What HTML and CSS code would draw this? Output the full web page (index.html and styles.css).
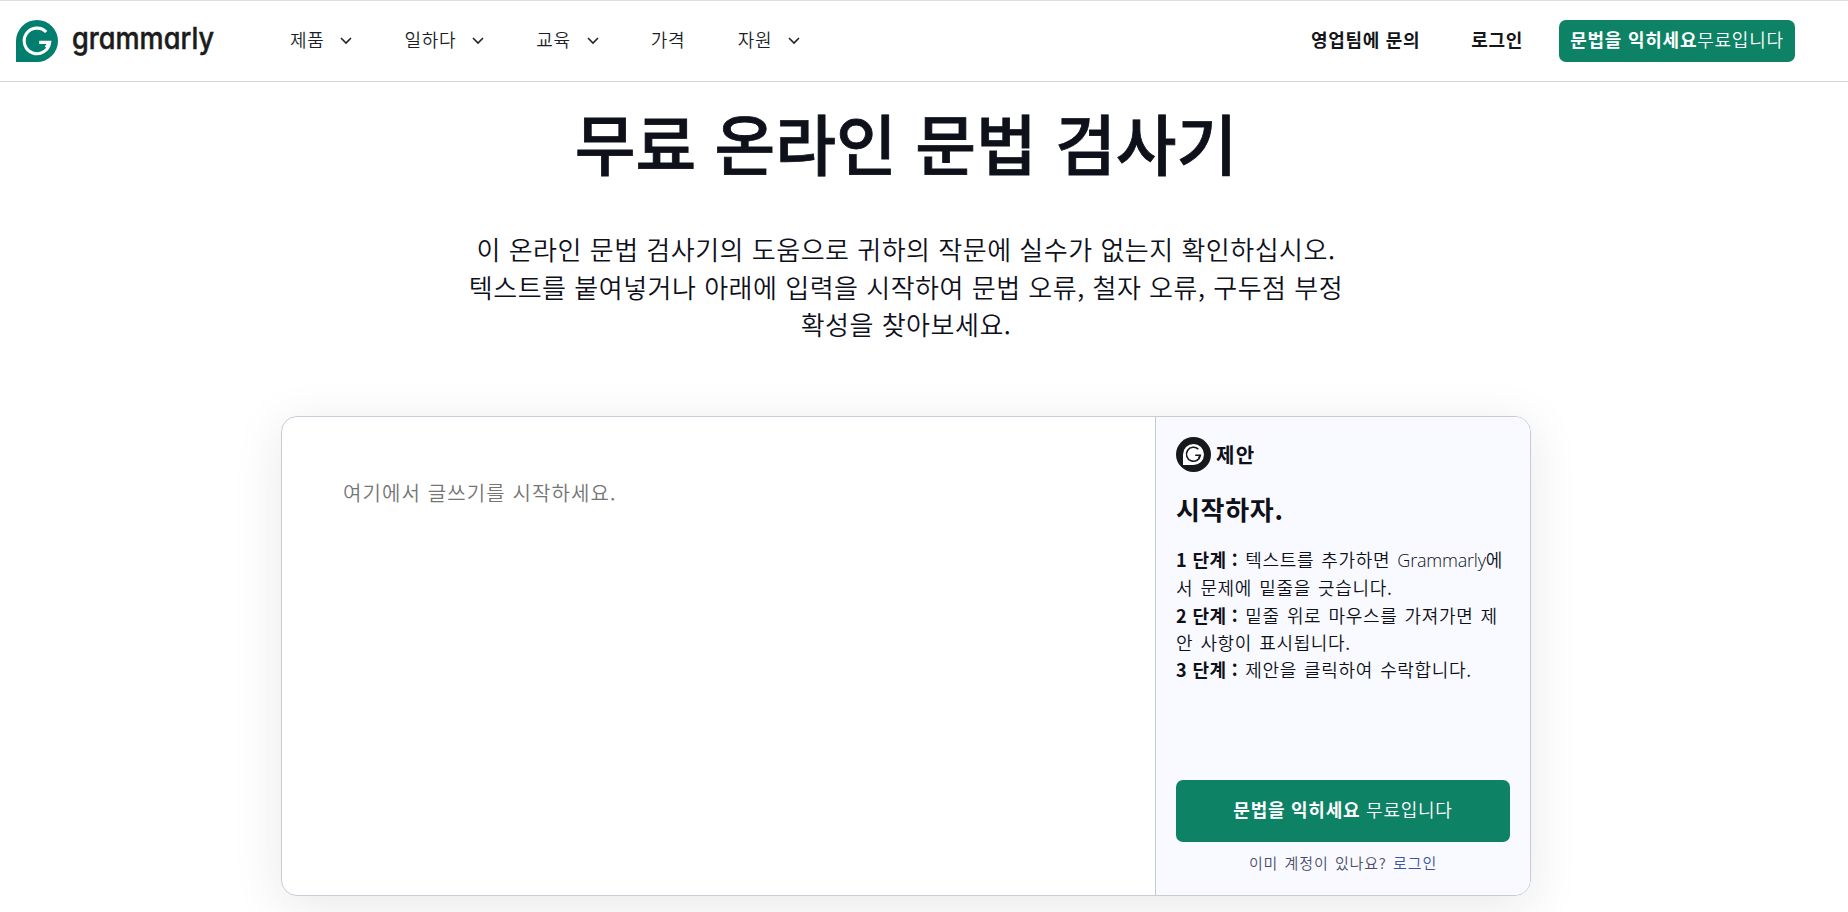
FILE: index.html
```html
<!DOCTYPE html>
<html lang="ko">
<head>
<meta charset="UTF-8"><meta name="viewport" content="width=device-width,initial-scale=1">
<title>무료 온라인 문법 검사기</title>
<link rel="stylesheet" href="styles.css">
</head>
<body>
<header>
  <a class="logo">
    <svg class="mark" viewBox="0 0 42 42"><path d="M0 42V21A21 21 0 1 1 21 42Z" fill="#027e6f"/><path d="M30.2 12A12.8 12.8 0 1 0 33.7 22.4H23.2M33.7 22.4L30 27.5" fill="none" stroke="#fff" stroke-width="3.1"/></svg>
    <svg class="wordmark" viewBox="0 0 142 42"><text x="-1" y="29" textLength="142" lengthAdjust="spacingAndGlyphs">grammarly</text></svg>
  </a>
  <nav>
    <a>제품<svg class="chev" viewBox="0 0 12 8"><path d="M1 1l5 5 5-5"/></svg></a>
    <a>일하다<svg class="chev" viewBox="0 0 12 8"><path d="M1 1l5 5 5-5"/></svg></a>
    <a>교육<svg class="chev" viewBox="0 0 12 8"><path d="M1 1l5 5 5-5"/></svg></a>
    <a>가격</a>
    <a>자원<svg class="chev" viewBox="0 0 12 8"><path d="M1 1l5 5 5-5"/></svg></a>
  </nav>
  <div class="account">
    <a>영업팀에 문의</a>
    <a>로그인</a>
    <a class="btn"><b>문법을 익히세요</b>무료입니다</a>
  </div>
</header>
<main>
  <h1>무료 온라인 문법 검사기</h1>
  <p class="lead">이 온라인 문법 검사기의 도움으로 귀하의 작문에 실수가 없는지 확인하십시오.<br>텍스트를 붙여넣거나 아래에 입력을 시작하여 문법 오류, 철자 오류, 구두점 부정<br>확성을 찾아보세요.</p>
  <section class="checker">
    <div class="editor">여기에서 글쓰기를 시작하세요.</div>
    <aside>
      <div class="suggest">
        <svg viewBox="0 0 35 35"><circle cx="17.5" cy="17.5" r="17.5" fill="#16181b"/><path d="M7 28V17.5A10.5 10.5 0 1 1 17.5 28Z" fill="#fff"/><path d="M22.4 12.3A7 7 0 1 0 24.4 18.2H19.2M24.4 18.2L22.6 21" fill="none" stroke="#16181b" stroke-width="1.6"/></svg>
        제안
      </div>
      <h2>시작하자.</h2>
      <div class="steps">
        <p><b>1 단계 :</b> 텍스트를 추가하면 <span class="latin">Grammarly</span>에<br>서 문제에 밑줄을 긋습니다.</p>
        <p><b>2 단계 :</b> 밑줄 위로 마우스를 가져가면 제<br>안 사항이 표시됩니다.</p>
        <p><b>3 단계 :</b> 제안을 클릭하여 수락합니다.</p>
      </div>
      <a class="btn big"><b>문법을 익히세요</b> 무료입니다</a>
      <p class="login">이미 계정이 있나요? <a>로그인</a></p>
    </aside>
  </section>
</main>
</body>
</html>
```
FILE: styles.css
```css
*{box-sizing:border-box}
body{margin:0;height:912px;overflow:hidden;background:#fff;color:#0e101a;font-family:"Noto Sans CJK KR","Noto Sans",sans-serif;font-weight:350;white-space:nowrap}
h1,h2,p{margin:0}
header{display:flex;align-items:center;height:82px;padding:0 53px 0 16px;border-top:1px solid #ddd;border-bottom:1px solid #d4d4d4;font-size:18px;letter-spacing:.7px;color:#1c1f2b}
.logo{display:flex;gap:15px}
.mark{width:42px;height:42px}
.wordmark{width:142px;height:42px;overflow:visible}
.wordmark text{font-family:Inter,Lato,sans-serif;font-feature-settings:"cv11";font-size:30.5px;font-weight:500;letter-spacing:0;fill:#1c1c1c;stroke:#1c1c1c;stroke-width:.5}
nav{display:flex;gap:52.3px;margin-left:75px}
nav a,.account a:not(.btn){display:flex;align-items:center;padding-bottom:4px}
.chev{width:12px;height:8px;margin:4px 0 0 15.7px;fill:none;stroke:#222;stroke-width:1.6}
.account{display:flex;align-items:center;margin-left:auto;font-weight:600;color:#141619}
.account a{margin-left:51px}
.btn{background:#0e8265;color:#fff;border-radius:7px;font-weight:350;text-align:center}
b,.btn b{font-weight:700}
.account .btn{width:236px;height:42px;line-height:38px;margin-left:36px;letter-spacing:.75px}
main{width:1250px;margin:0 auto;position:relative;left:-18px}
h1{padding-top:11px;font-size:66px;line-height:96px;font-weight:500;text-align:center;-webkit-text-stroke:.8px #0e101a}
.lead{margin-top:41px;font-size:26px;line-height:37.6px;letter-spacing:.5px;text-align:center}
.checker{display:flex;height:480px;margin-top:73px;border:1px solid #c8cad6;border-radius:16px;box-shadow:0 10px 50px rgba(30,32,40,.1);overflow:hidden}
.editor{flex:none;width:873px;padding:61px;font-size:20px;line-height:30px;letter-spacing:1.1px;color:#757575}
aside{flex:1;min-width:0;display:flex;flex-direction:column;padding:20px;border-left:1px solid #c8cad6;background:#f9faff}
.suggest{display:flex;align-items:center;gap:5px;font-size:20px;line-height:35px;letter-spacing:1.3px;font-weight:600}
.suggest svg{width:35px;height:35px}
h2{margin-top:17px;font-size:26px;line-height:40px;letter-spacing:.7px;font-weight:600}
.steps{margin-top:17px;font-size:18px;line-height:27.4px;letter-spacing:.65px;word-spacing:1.5px}
.steps b{letter-spacing:.4px;word-spacing:0}
.latin{font-family:"Open Sans","Noto Sans",sans-serif;font-weight:300;letter-spacing:-.2px}
.big{height:62px;margin-top:auto;line-height:59px;font-size:18px;letter-spacing:.75px}
.login{margin-top:8px;font-size:15px;line-height:25px;letter-spacing:.85px;word-spacing:1.3px;text-align:center;color:#4a4e69}
.login a{color:#3b53a4}
```
